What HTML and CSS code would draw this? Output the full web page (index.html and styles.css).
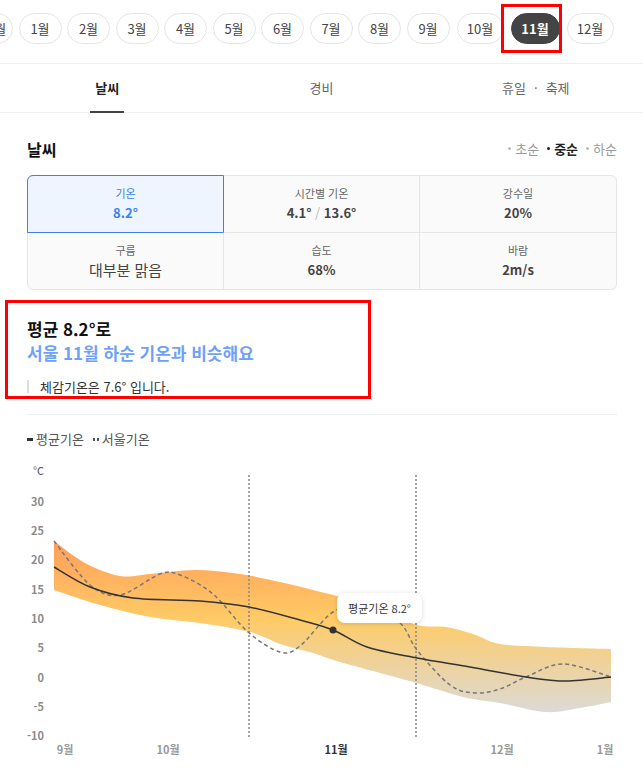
FILE: index.html
```html
<!DOCTYPE html>
<html lang="ko">
<head>
    <meta charset="UTF-8">
    <meta name="viewport" content="width=device-width, initial-scale=1.0">
    <title>서울 11월 날씨</title>
    <link rel="stylesheet" href="styles.css">
</head>
<body>
    <div class="months">
        <span class="pill edge">12월</span>
        <span class="pill">1월</span>
        <span class="pill">2월</span>
        <span class="pill">3월</span>
        <span class="pill">4월</span>
        <span class="pill">5월</span>
        <span class="pill">6월</span>
        <span class="pill">7월</span>
        <span class="pill">8월</span>
        <span class="pill">9월</span>
        <span class="pill two">10월</span>
        <span class="pill two on">11월</span>
        <span class="pill two">12월</span>
    </div>
    <div class="mark mark-month"></div>

    <nav class="tabs">
        <div class="tab active"><span>날씨</span></div>
        <div class="tab"><span>경비</span></div>
        <div class="tab"><span>휴일<b class="dot">·</b>축제</span></div>
    </nav>

    <section class="weather">
        <div class="head">
            <h2>날씨</h2>
            <ul class="period">
                <li>초순</li>
                <li class="on">중순</li>
                <li>하순</li>
            </ul>
        </div>

        <div class="stats">
            <div class="stat on">
                <div class="label">기온</div>
                <div class="value">8.2°</div>
            </div>
            <div class="stat">
                <div class="label">시간별 기온</div>
                <div class="value">4.1° <span class="slash">/</span> 13.6°</div>
            </div>
            <div class="stat">
                <div class="label">강수일</div>
                <div class="value">20%</div>
            </div>
            <div class="stat">
                <div class="label">구름</div>
                <div class="value plain">대부분 맑음</div>
            </div>
            <div class="stat">
                <div class="label">습도</div>
                <div class="value">68%</div>
            </div>
            <div class="stat">
                <div class="label">바람</div>
                <div class="value">2m/s</div>
            </div>
        </div>

        <div class="summary">
            <p class="title">평균 8.2°로<br><em>서울 11월 하순 기온과 비슷해요</em></p>
            <p class="note">체감기온은 7.6° 입니다.</p>
        </div>

        <div class="legend">
            <span class="key"><i class="solid"></i>평균기온</span>
            <span class="key"><i class="dotted"></i>서울기온</span>
        </div>
    </section>
    <div class="mark mark-summary"></div>

    <div class="chart">
        <svg width="643" height="335" viewBox="0 447 643 335">
            <defs>
                <linearGradient id="band" gradientUnits="userSpaceOnUse" x1="0" y1="540" x2="0" y2="712">
                    <stop offset="0" stop-color="#ff9d5a"/>
                    <stop offset="0.46" stop-color="#ffcb66"/>
                    <stop offset="1" stop-color="#dcdad6"/>
                </linearGradient>
            </defs>

            <g class="axis-y">
                <text x="33" y="475" class="unit">°C</text>
                <text x="44" y="506">30</text>
                <text x="44" y="535">25</text>
                <text x="44" y="564">20</text>
                <text x="44" y="594">15</text>
                <text x="44" y="623">10</text>
                <text x="44" y="652">5</text>
                <text x="44" y="682">0</text>
                <text x="44" y="711">-5</text>
                <text x="44" y="740">-10</text>
            </g>

            <path id="bandPath" fill="url(#band)"/>
            <line class="week" x1="249" y1="475" x2="249" y2="737"/>
            <line class="week" x1="416" y1="475" x2="416" y2="737"/>
            <path id="seoulPath" class="seoul"/>
            <path id="avgPath" class="avg"/>
            <circle cx="333" cy="630" r="3.5" fill="#333"/>

            <g class="axis-x">
                <text x="65" y="754">9월</text>
                <text x="168" y="754">10월</text>
                <text x="336" y="754" class="now">11월</text>
                <text x="502" y="754">12월</text>
                <text x="605" y="754">1월</text>
            </g>
        </svg>
        <div class="tooltip">평균기온 8.2°</div>
    </div>

    <script src="script.js"></script>
</body>
</html>
```

FILE: styles.css
```css
* {
    box-sizing: border-box;
}

html, body {
    overflow: hidden;
}

body {
    margin: 0;
    font-family: "Noto Sans CJK KR", "Noto Sans", sans-serif;
    color: #222;
    background: #fff;
    position: relative;
}

/* month picker */
.months {
    display: flex;
    gap: 5.5px;
    height: 64px;
    padding-top: 13px;
    border-bottom: 1px solid #eee;
    overflow: hidden;
    white-space: nowrap;
}

.pill {
    flex-shrink: 0;
    width: 43px;
    height: 31px;
    line-height: 29px;
    border: 1px solid #e4e4e4;
    border-radius: 16px;
    text-align: center;
    font-size: 13px;
    color: #444;
}

.pill.edge {
    width: 48px;
    margin-left: -35px;
    text-indent: 8px;
}

.pill.two {
    width: 47px;
    margin-left: 1.5px;
}

.pill.on {
    width: 49px;
    background: #444;
    border-color: #444;
    color: #fff;
    font-weight: bold;
}

.mark {
    position: absolute;
    border: 3px solid #f00;
}

.mark-month {
    left: 501px;
    top: 4px;
    width: 61px;
    height: 49px;
}

.mark-summary {
    left: 5px;
    top: 300px;
    width: 366px;
    height: 99px;
}

/* tabs */
.tabs {
    display: grid;
    grid-template-columns: repeat(3, 1fr);
    height: 49px;
    border-bottom: 1px solid #eee;
}

.tab {
    display: flex;
    justify-content: center;
}

.tab span {
    height: 48px;
    line-height: 47px;
    padding: 0 5px;
    font-size: 13px;
    color: #666;
}

.tab .dot {
    font-weight: normal;
    margin: 0 8px;
}

.tab.active span {
    color: #222;
    font-weight: bold;
    border-bottom: 2px solid #444;
    line-height: 47px;
    height: 49px;
}

/* weather */
.weather {
    padding: 0 26px 0 27px;
}

.head {
    display: flex;
    justify-content: space-between;
    align-items: center;
    padding-top: 24px;
    height: 48px;
}

.head h2 {
    margin: 0;
    font-size: 16px;
    line-height: 24px;
    color: #111;
}

.period {
    display: flex;
    gap: 8px;
    margin: 0;
    padding: 0;
    list-style: none;
    font-size: 13px;
    line-height: 20px;
    color: #999;
}

.period li::before {
    content: "";
    display: inline-block;
    width: 3px;
    height: 3px;
    margin: 0 4px 3px 0;
    border-radius: 50%;
    background: #bbb;
    vertical-align: middle;
}

.period li.on {
    color: #222;
    font-weight: bold;
}

.period li.on::before {
    background: #222;
}

.stats {
    display: grid;
    grid-template-columns: repeat(3, 1fr);
    margin-top: 14px;
    border: 1px solid #e6e6e6;
    border-radius: 6px;
    background: #fafafa;
}

.stat {
    height: 57px;
    padding-top: 9px;
    text-align: center;
    border-right: 1px solid #e6e6e6;
    border-bottom: 1px solid #e6e6e6;
}

.stat:nth-child(3n) {
    border-right: 0;
}

.stat:nth-child(n+4) {
    height: 56px;
    border-bottom: 0;
}

.stat.on {
    height: 58px;
    margin: -1px 0 0 -1px;
    border: 1px solid #3b80f0;
    border-top-left-radius: 6px;
    background: #eef5ff;
}

.label {
    font-size: 11px;
    line-height: 16px;
    color: #666;
}

.value {
    margin-top: 2px;
    font-size: 13px;
    line-height: 20px;
    font-weight: bold;
    color: #444;
}

.value.plain {
    font-size: 15px;
    font-weight: normal;
}

.slash {
    font-weight: normal;
    color: #bbb;
}

.stat.on .label,
.stat.on .value {
    color: #3b80f0;
}

/* summary */
.summary {
    margin-top: 27px;
}

.summary p {
    margin: 0;
}

.title {
    font-size: 17px;
    line-height: 24px;
    font-weight: bold;
    color: #111;
}

.title em {
    font-style: normal;
    color: #6fa1f8;
}

.note {
    margin-top: 15px !important;
    height: 13px;
    line-height: 13px;
    padding-left: 11px;
    border-left: 2px solid #ddd;
    font-size: 13px;
    color: #333;
}

.legend {
    display: flex;
    gap: 9px;
    margin-top: 21px;
    padding-top: 16px;
    border-top: 1px solid #eee;
    font-size: 13px;
    line-height: 16px;
    color: #555;
}

.key i {
    display: inline-block;
    width: 6px;
    height: 3px;
    margin-right: 3px;
    vertical-align: middle;
    margin-bottom: 2px;
}

.key .solid {
    background: #333;
}

.key .dotted {
    background: linear-gradient(90deg, #555 0 2px, transparent 2px 4px, #555 4px 6px);
}

/* chart */
.chart {
    position: relative;
    height: 335px;
}

.chart svg {
    display: block;
}

.axis-y text {
    font-size: 11px;
    font-weight: bold;
    fill: #8c8c8c;
    text-anchor: end;
}

.axis-y .unit {
    text-anchor: start;
    font-weight: normal;
    fill: #555;
}

.axis-x text {
    font-size: 11px;
    font-weight: bold;
    fill: #999;
    text-anchor: middle;
}

.axis-x .now {
    fill: #333;
}

.week {
    stroke: #888;
    stroke-width: 1.5;
    stroke-dasharray: 2 2;
}

.avg {
    fill: none;
    stroke: #333;
    stroke-width: 1.5;
}

.seoul {
    fill: none;
    stroke: #777;
    stroke-width: 1.5;
    stroke-dasharray: 4 3;
}

.tooltip {
    position: absolute;
    left: 337px;
    top: 146px;
    width: 85px;
    height: 30px;
    line-height: 30px;
    border-radius: 8px;
    background: #fff;
    box-shadow: 0 1px 5px rgba(0, 0, 0, 0.15);
    text-align: center;
    font-size: 11px;
    color: #333;
}
```

FILE: script.js
```js
const upper = [[54,541],[85,563],[120,576],[150,574],[195,570],[240,574],[280,582],[313,590],[340,597],[380,610],[417,625],[446,627],[473,634],[500,644],[546,647],[611,649]];
const lower = [[54,590],[100,605],[150,617],[200,623],[250,632],[283,645],[313,653],[340,662],[413,682],[463,697],[500,703],[546,712],[580,708],[611,702]];
const avg = [[54,567],[90,587],[133,598],[200,601],[249,607],[300,620],[333,630],[367,647],[417,658],[470,667],[526,677],[566,681],[611,677]];
const seoul = [[54,541],[90,585],[120,595],[160,574],[180,575],[213,594],[248,632],[280,652],[300,646],[333,612],[365,604],[400,623],[417,650],[450,685],[475,693],[500,689],[526,677],[563,664],[611,677]];

// catmull-rom points -> cubic bezier path
function smooth(p, cmd) {
    let d = cmd + p[0][0] + ' ' + p[0][1];
    for (let i = 0; i < p.length - 1; i++) {
        const p0 = p[i - 1] || p[i];
        const p1 = p[i];
        const p2 = p[i + 1];
        const p3 = p[i + 2] || p2;
        const c1x = p1[0] + (p2[0] - p0[0]) / 6;
        const c1y = p1[1] + (p2[1] - p0[1]) / 6;
        const c2x = p2[0] - (p3[0] - p1[0]) / 6;
        const c2y = p2[1] - (p3[1] - p1[1]) / 6;
        d += ` C${c1x} ${c1y} ${c2x} ${c2y} ${p2[0]} ${p2[1]}`;
    }
    return d;
}

document.getElementById('bandPath').setAttribute('d',
    smooth(upper, 'M') + ' ' + smooth(lower.slice().reverse(), 'L') + ' Z');
document.getElementById('avgPath').setAttribute('d', smooth(avg, 'M'));
document.getElementById('seoulPath').setAttribute('d', smooth(seoul, 'M'));
```
